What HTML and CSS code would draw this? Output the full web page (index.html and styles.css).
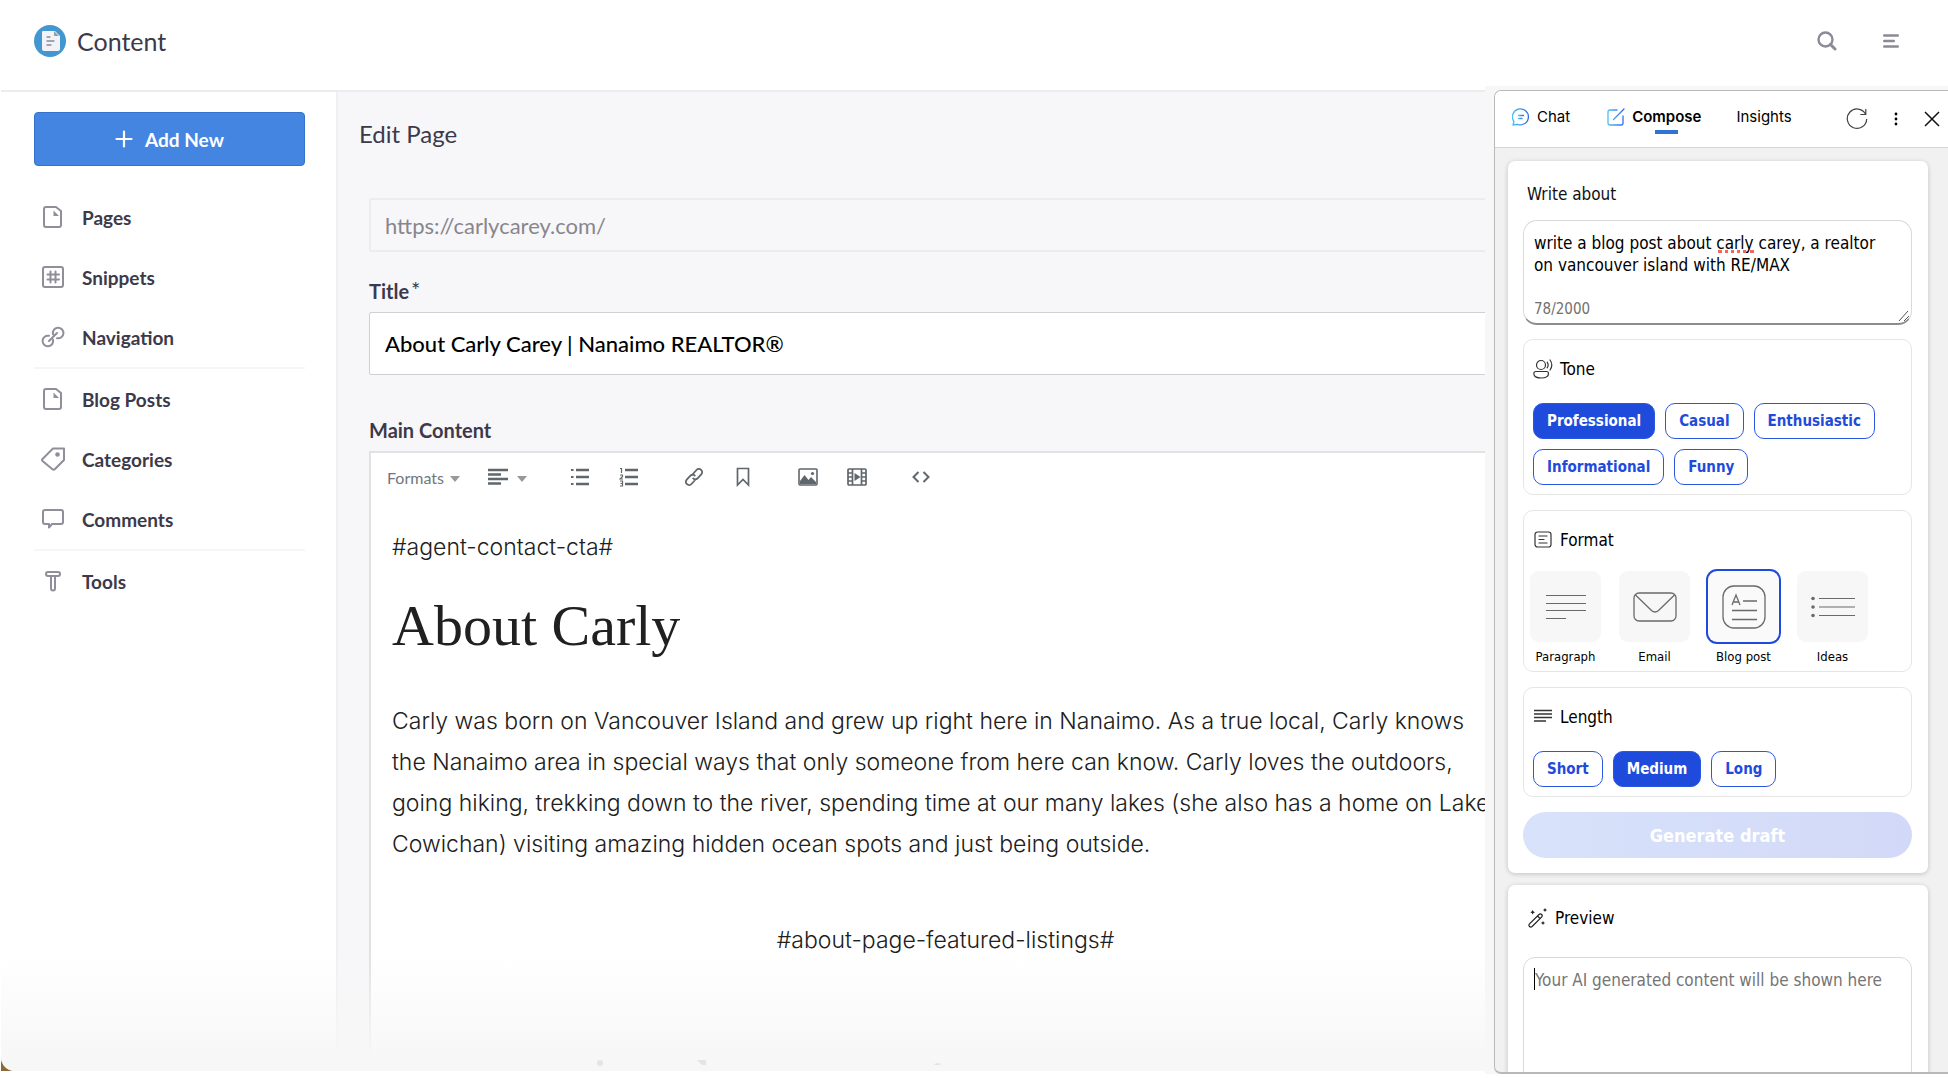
FILE: index.html
```html
<!DOCTYPE html>
<html lang="en">
<head>
<meta charset="utf-8">
<title>Content - Edit Page</title>
<link rel="stylesheet" href="styles.css">
</head>
<body>
<svg class="defs" aria-hidden="true">
  <defs>
    <linearGradient id="sky" x1="0" y1="0" x2="1" y2="0"><stop offset="0" stop-color="#4cc0f5"/><stop offset="1" stop-color="#2f6bea"/></linearGradient>
    <symbol id="i-page" viewBox="0 0 24 24"><path d="M5 2h10l5 4v14a2 2 0 0 1-2 2H5a2 2 0 0 1-2-2V4a2 2 0 0 1 2-2z" fill="none" stroke="currentColor" stroke-width="2" stroke-linejoin="round"/><path d="M12.500 5.500v5.500h5.500z" fill="currentColor"/></symbol>
  </defs>
</svg>
<div class="window">
  <div class="app">
    <header class="topbar">
      <a class="brand" href="#">
        <svg width="32" height="32" viewBox="0 0 32 32"><circle cx="16" cy="16" r="16" fill="#4297d0"/><path d="M9 6h12l5 5v13a2 2 0 0 1-2 2H10a2 2 0 0 1-2-2V7a1 1 0 0 1 1-1z" fill="#f2f3f8"/><path d="M20 6l5 5h-5z" fill="#9a9ea8"/><path d="M13 12h3M13 16h7M13 20h4" stroke="#8b8b95" stroke-width="1.3" stroke-linecap="round"/></svg>
        <span>Content</span>
      </a>
      <div class="topbar-tools">
        <button type="button" aria-label="Search"><svg width="20" height="20" viewBox="0 0 20 20" fill="none" stroke="currentColor"><circle cx="8.500" cy="8.500" r="7" stroke-width="2.400"/><path d="M13.500 13.500l4.500 4.500" stroke-width="3" stroke-linecap="round"/></svg></button>
        <button type="button" aria-label="Menu"><svg width="16" height="14" viewBox="0 0 16 14" fill="none" stroke="currentColor" stroke-width="2.400" stroke-linecap="round"><path d="M1.200 1.500h13.600M1.200 7h9.600M1.200 12.500h13.600"/></svg></button>
      </div>
    </header>
    <div class="body">
      <nav class="sidebar">
        <button type="button" class="add"><svg width="18" height="18" viewBox="0 0 18 18" stroke="#fff" stroke-width="2.200" stroke-linecap="round"><path d="M9 1.500v15M1.500 9h15"/></svg>Add New</button>
        <ul>
          <li><a href="#"><svg width="24" height="24"><use href="#i-page"/></svg>Pages</a></li>
          <li><a href="#"><svg width="24" height="24" viewBox="0 0 24 24" fill="none" stroke="currentColor" stroke-width="2"><rect x="2" y="2" width="20" height="20" rx="2"/><path d="M9.500 6.500v11M14.500 6.500v11M6.500 9.500h11.500M6.500 14.500h11.500" stroke-linecap="round"/></svg>Snippets</a></li>
          <li><a href="#"><svg width="24" height="24" viewBox="0 0 24 24" fill="none" stroke="currentColor" stroke-width="2" stroke-linecap="round"><path d="M12 9.300a5.300 5.300 0 1 1 4 3.900M12 14.700a5.300 5.300 0 1 1-4-3.900M8 16l8-8"/></svg>Navigation</a></li>
        </ul>
        <ul>
          <li><a href="#"><svg width="24" height="24"><use href="#i-page"/></svg>Blog Posts</a></li>
          <li><a href="#"><svg width="24" height="24" viewBox="0 0 24 24" fill="none" stroke="currentColor" stroke-width="2" stroke-linejoin="round"><path d="M12 1.500h11v11.500L14 22a2 2 0 0 1-2.800 0L1.500 14a1.500 1.500 0 0 1 0-2z"/><circle cx="16.500" cy="7.500" r="1.300" fill="currentColor"/></svg>Categories</a></li>
          <li><a href="#"><svg width="24" height="24" viewBox="0 0 24 24" fill="none" stroke="currentColor" stroke-width="2" stroke-linejoin="round"><path d="M4 3h16a2 2 0 0 1 2 2v10a2 2 0 0 1-2 2h-9l-3 3.500v-3.500H4a2 2 0 0 1-2-2V5a2 2 0 0 1 2-2z"/></svg>Comments</a></li>
        </ul>
        <ul>
          <li><a href="#"><svg width="24" height="24" viewBox="0 0 24 24" fill="none" stroke="currentColor" stroke-width="2" stroke-linejoin="round"><rect x="5" y="3" width="14" height="4" rx="2"/><path d="M10 7v12.500a2 2 0 0 0 4 0V7"/></svg>Tools</a></li>
        </ul>
      </nav>
      <main class="main">
        <h1>Edit Page</h1>
        <form class="form">
          <input class="url" type="text" aria-label="Address" value="https://carlycarey.com/" readonly>
          <label for="title">Title<sup>*</sup></label>
          <input class="title" id="title" type="text" value="About Carly Carey | Nanaimo REALTOR®">
          <h2>Main Content</h2>
          <div class="editor">
            <div class="toolbar">
              <button type="button" class="formats">Formats <i class="caret"></i></button>
              <button type="button" class="align" aria-label="Alignment"><svg width="20" height="18" viewBox="0 0 20 18" stroke="currentColor" stroke-width="2.600"><path d="M0 2h20M0 6.500h13M0 11h20M0 15.500h13"/></svg><i class="caret"></i></button>
              <span class="pair">
                <button type="button" aria-label="Bulleted list"><svg width="20" height="20" viewBox="0 0 20 20" stroke="currentColor"><path d="M6 3h13M6 10h13M6 17h13" stroke-width="2.400"/><path d="M1 3h2.500M1 10h2.500M1 17h2.500" stroke-width="2.200"/></svg></button>
                <button type="button" aria-label="Numbered list"><svg width="20" height="20" viewBox="0 0 20 20" fill="none" stroke="currentColor"><path d="M6 3h13M6 10h13M6 17h13" stroke-width="2.400"/><path d="M1 1.500h1.500V6M1 8h2.500v1.500L1 12h3M1 14h2.500v5H1M1.500 16.500h2" stroke-width="1.200"/></svg></button>
              </span>
              <span class="pair">
                <button type="button" aria-label="Link"><svg width="20" height="20" viewBox="0 0 20 20" fill="none" stroke="currentColor" stroke-width="1.800" stroke-linecap="round"><path d="M8 8l4.500-5a3.200 3.200 0 0 1 4.800 4.400l-3.800 4a3 3 0 0 1-4.300 0M12 12l-4.500 5a3.200 3.200 0 0 1-4.800-4.400l3.800-4a3 3 0 0 1 4.300 0"/></svg></button>
                <button type="button" aria-label="Bookmark"><svg width="20" height="20" viewBox="0 0 20 20" fill="none" stroke="currentColor" stroke-width="1.700"><path d="M4.500 1.500h11V18L10 12.500 4.500 18z"/></svg></button>
              </span>
              <span class="pair">
                <button type="button" aria-label="Image"><svg width="20" height="20" viewBox="0 0 20 20" fill="none" stroke="currentColor" stroke-width="1.600"><rect x="1" y="2" width="18" height="16" rx="1"/><path d="M2 17v-3l4.500-6 4 5 2.500-3 5 5v2z" fill="currentColor" stroke="none"/><circle cx="14.500" cy="6.500" r="1.600" fill="currentColor" stroke="none"/></svg></button>
                <button type="button" aria-label="Media"><svg width="20" height="20" viewBox="0 0 20 20" fill="none" stroke="currentColor" stroke-width="1.700"><rect x="1" y="2" width="18" height="16" rx="1"/><path d="M5.500 2v16M14.500 2v16M1 6h4.500M1 10h4.500M1 14h4.500M14.500 6H19M14.500 10H19M14.500 14H19"/><path d="M7.500 6l6 4-6 4z" fill="currentColor" stroke="none"/></svg></button>
              </span>
              <button type="button" class="code" aria-label="Source code"><svg width="18" height="12" viewBox="0 0 18 12" fill="none" stroke="currentColor" stroke-width="2"><path d="M6.500 1L1.500 6l5 5M11.500 1l5 5-5 5"/></svg></button>
            </div>
            <article class="copy">
              <p>#agent-contact-cta#</p>
              <h3>About Carly</h3>
              <p>Carly was born on Vancouver Island and grew up right here in Nanaimo. As a true local, Carly knows<br>the Nanaimo area in special ways that only someone from here can know. Carly loves the outdoors,<br>going hiking, trekking down to the river, spending time at our many lakes (she also has a home on Lake<br>Cowichan) visiting amazing hidden ocean spots and just being outside.</p>
              <p class="centered">#about-page-featured-listings#</p>
            </article>
          </div>
        </form>
      </main>
    </div>
    <div class="fade"><svg width="346" height="6" viewBox="0 0 346 6" fill="#e4e4e4"><circle cx="4" cy="3" r="3"/><path d="M101 0h9v5h-4zM338 5a4 4 0 0 1 7 0z"/></svg></div>
  </div>

  <aside class="panel">
    <div class="tabs">
      <button type="button" class="tab"><svg width="18" height="18" viewBox="0 0 18 18" fill="none" stroke="url(#sky)" stroke-width="1.300" stroke-linecap="round" stroke-linejoin="round"><path d="M1 17l.9-3.500A8 8 0 1 1 5.500 16.300z"/><path d="M6.500 7.500h5M6.500 10.500h3.500"/></svg>Chat</button>
      <button type="button" class="tab active"><svg width="18" height="18" viewBox="0 0 18 18" fill="none" stroke="url(#sky)" stroke-width="1.300" stroke-linecap="round" stroke-linejoin="round"><path d="M10 2H3a2 2 0 0 0-2 2v11a2 2 0 0 0 2 2h11a2 2 0 0 0 2-2V8M6.500 11.500L17 1"/></svg><span>Compose</span></button>
      <button type="button" class="tab">Insights</button>
      <div class="actions">
        <button type="button" aria-label="Refresh"><svg width="22" height="22" viewBox="0 0 22 22" fill="none" stroke="#444" stroke-width="1.200"><path d="M19.500 6A9.700 9.700 0 1 0 20.700 11M19.800 1v5.500h-5.500"/></svg></button>
        <button type="button" aria-label="More"><svg width="4" height="14" viewBox="0 0 4 14"><circle cx="2" cy="2" r="1.400"/><circle cx="2" cy="7" r="1.400"/><circle cx="2" cy="12" r="1.400"/></svg></button>
        <button type="button" aria-label="Close"><svg width="16" height="16" viewBox="0 0 16 16" stroke="#111" stroke-width="1.500"><path d="M1 1l14 14M15 1L1 15"/></svg></button>
      </div>
    </div>
    <div class="panel-body">
      <section class="card">
        <label class="about-label" for="about">Write about</label>
        <div class="prompt">
          <textarea id="about" rows="2" spellcheck="false">write a blog post about carly carey, a realtor
on vancouver island with RE/MAX</textarea>
          <span class="typo"></span>
          <span class="count">78/2000</span>
          <svg class="grip" width="12" height="12" viewBox="0 0 12 12" stroke="#555" stroke-width="1"><path d="M1 11L10 1M6 11l5-5"/></svg>
        </div>
        <section class="group">
          <h4><svg width="20" height="20" viewBox="0 0 20 20" fill="none" stroke="#333" stroke-width="1.200" stroke-linecap="round"><circle cx="8" cy="6" r="4.500"/><path d="M2.500 12.500h11a2 2 0 0 1 2 2c0 3-3 4.500-7.500 4.500S.8 17.500.8 14.500a2 2 0 0 1 1.700-2zM14.200 3.200a5 5 0 0 1 0 5.600M17 1a8.500 8.500 0 0 1 0 10"/></svg>Tone</h4>
          <div class="pills">
            <button type="button" class="pill on" aria-pressed="true">Professional</button>
            <button type="button" class="pill">Casual</button>
            <button type="button" class="pill">Enthusiastic</button>
            <button type="button" class="pill">Informational</button>
            <button type="button" class="pill">Funny</button>
          </div>
        </section>
        <section class="group">
          <h4><svg width="20" height="20" viewBox="0 0 20 20" fill="none" stroke="#333" stroke-width="1.200" stroke-linecap="round"><rect x="2" y="2" width="16" height="15" rx="2.500"/><path d="M6 6h8M6 9.500h5M6 13h8"/></svg>Format</h4>
          <div class="tiles">
            <button type="button" class="tile"><span class="face"><svg width="40" height="40" viewBox="0 0 40 40" fill="none" stroke="currentColor" stroke-width="1.200"><path d="M0 8.500h40M0 16.500h40M0 23.500h40M0 31.500h20"/></svg></span>Paragraph</button>
            <button type="button" class="tile"><span class="face"><svg width="44" height="44" viewBox="0 0 44 44" fill="none" stroke="currentColor" stroke-width="1.300"><rect x="1" y="8" width="42" height="28" rx="5"/><path d="M2.500 10L18.500 25.500q3.500 3 7 0L41.500 10"/></svg></span>Email</button>
            <button type="button" class="tile on" aria-pressed="true"><span class="face"><svg width="44" height="44" viewBox="0 0 44 44" fill="none" stroke="currentColor" stroke-width="1.300"><rect x="1" y="1" width="42" height="42" rx="11"/><path d="M21 16h14M10 25.500h25M10 34.500h25M10 20l4-10 4 10M11.500 17h5"/></svg></span>Blog post</button>
            <button type="button" class="tile"><span class="face"><svg width="44" height="44" viewBox="0 0 44 44" fill="none" stroke="currentColor" stroke-width="1.200"><path d="M8 13.500h36M8 22h36M8 30.500h36"/><g fill="currentColor" stroke="none"><circle cx="2" cy="13.500" r="1.800"/><circle cx="2" cy="22" r="1.800"/><circle cx="2" cy="30.500" r="1.800"/></g></svg></span>Ideas</button>
          </div>
        </section>
        <section class="group">
          <h4><svg width="20" height="20" viewBox="0 0 20 20" stroke="#333" stroke-width="1.300"><path d="M1 3.500h18M1 7h18M1 10.500h18M1 14h12"/></svg>Length</h4>
          <div class="pills">
            <button type="button" class="pill">Short</button>
            <button type="button" class="pill on" aria-pressed="true">Medium</button>
            <button type="button" class="pill">Long</button>
          </div>
        </section>
        <button type="button" class="generate">Generate draft</button>
      </section>
      <section class="card preview">
        <h4><svg width="20" height="20" viewBox="0 0 20 20" fill="none" stroke="#222" stroke-width="1.200"><path d="M1.500 18.500q-1.200-1.200 0-2.600L11 6.500a1.800 1.800 0 0 1 2.600 2.600L4.100 18.500q-1.400 1.200-2.600 0zM9.500 8l2.500 2.500"/><path d="M4.500 2l1 1.500 1.500.7-1.500.7-1 1.500-.7-1.500-1.500-.7 1.500-.7zM17 0l.7 1.300 1.300.7-1.300.7L17 4l-.7-1.300L15 2l1.300-.7zM15 13l.7 1.300 1.300.7-1.300.7L15 17l-.7-1.300L13 15l1.300-.7z" fill="#222" stroke="none"/></svg>Preview</h4>
        <textarea class="result" aria-label="Preview" placeholder="Your AI generated content will be shown here"></textarea>
        <span class="cursor"></span>
      </section>
    </div>
  </aside>
</div>
</body>
</html>
```
FILE: styles.css
```css
* { box-sizing: border-box; }
body { margin: 0; background: #fff; font-family: Lato, "Liberation Sans", sans-serif; color: #3c3a4a; }
button { font: inherit; color: inherit; background: none; border: 0; padding: 0; cursor: pointer; }
svg { display: block; flex: none; }
a { color: inherit; text-decoration: none; }
h1, h2, h3, h4, p, ul { margin: 0; padding: 0; }
.defs { position: absolute; width: 0; height: 0; }

.window { position: relative; height: 100vh; padding: 0 0 7px 1px; overflow: hidden; background: linear-gradient(#fff, #fff) bottom / 100% 7px no-repeat, linear-gradient(90deg, #fff 1px, #8c6a35 1px); }
.app { position: relative; height: 100%; display: flex; flex-direction: column; background: #fff; border-radius: 0 0 0 14px; overflow: hidden; }

.topbar { flex: none; height: 92px; display: flex; justify-content: space-between; align-items: center; padding: 0 49px 8px 33px; border-bottom: 2px solid #ececee; }
.brand { display: flex; align-items: center; gap: 11px; font-size: 25px; }
.topbar-tools { display: flex; align-items: center; gap: 46px; color: #8b8a97; }

.body { flex: 1; min-height: 0; display: flex; }
.sidebar { flex: none; width: 337px; padding: 20px 31px 0 33px; border-right: 2px solid #f0f0f2; }
.add { width: 100%; height: 54px; display: flex; justify-content: center; align-items: center; gap: 12px; border: 1px solid #3572cc; border-radius: 4px; background: #4585e2; color: #fff; font-size: 19px; font-weight: 700; margin-bottom: 21px; }
.sidebar ul { list-style: none; }
.sidebar ul + ul { border-top: 2px solid #f6f6f8; }
.sidebar li a { display: flex; align-items: center; gap: 17px; height: 60px; padding-left: 7px; font-size: 19px; font-weight: 700; }
.sidebar svg { color: #8f8e9a; }
.sidebar .add svg { color: #fff; }

.main { flex: 1; min-width: 0; padding: 27px 463px 0 21px; background: #f7f7fa; overflow: hidden; }
.main h1 { font-size: 24px; line-height: 30px; font-weight: 400; }
.form { margin: 49px -40px 0 10px; display: flex; flex-direction: column; }
.form input { width: 100%; font: inherit; font-size: 22px; padding: 0 15px; border-radius: 2px; outline: 0; }
.form .url { height: 54px; padding: 0 14px; border: 2px solid #ececee; background: #f7f7fa; color: #87868c; }
.form .title { height: 63px; border: 1px solid #cfd0d6; background: #fff; color: #000; font-weight: 500; }
.form label, .form h2 { font-size: 20px; line-height: 28px; font-weight: 700; }
.form label { margin: 25px 0 7px; }
.form sup { font-size: 22px; line-height: 0; vertical-align: 1px; margin-left: 2px; font-weight: 400; }
.form h2 { margin: 41px 0 7px; }

.editor { height: 800px; background: #fff; border: 2px solid #e1e2e4; }
.toolbar { display: flex; align-items: center; height: 48px; padding-left: 16px; color: #5f666c; }
.toolbar button { display: flex; align-items: center; }
.formats { gap: 6px; font-size: 16px; margin-right: 28px; color: #70767c; }
.align { gap: 9px; margin-right: 43px; }
.caret { border: 5px solid transparent; border-top: 6px solid #999; border-bottom: 0; margin-top: 3px; }
.pair { display: flex; gap: 29px; margin-right: 45px; }
.copy { padding: 26px 24px 0 21px; font-family: Inter, "Liberation Sans", sans-serif; font-size: 23px; font-weight: 300; line-height: 41px; color: #202020; white-space: nowrap; }
.copy h3 { font-family: "Liberation Serif", serif; font-size: 58px; line-height: 76px; font-weight: 400; margin: 20px 0 37px; }
.copy .centered { margin: 55px 0 0; text-align: center; }

.fade { position: absolute; inset: auto 0 0 0; height: 116px; padding: 105px 0 0 595px; background: linear-gradient(rgba(247,247,247,0), #f7f7f7 90%); pointer-events: none; }

.panel { position: absolute; top: 90px; right: 0; bottom: 4px; z-index: 1; width: 454px; display: flex; flex-direction: column; overflow: hidden; background: #f1f1f1; border: solid #b9b9b9; border-width: 1px 0 2px 1px; border-radius: 7px 0 0 7px; font-family: "DejaVu Sans Condensed", "Noto Sans", sans-serif; color: #111; }
.window::after { content: ""; position: absolute; top: 86px; right: 0; bottom: 4px; width: 463px; background: #f7f7f7; }
.tabs { flex: none; display: flex; align-items: center; height: 57px; padding: 0 8px 5px 17px; background: #fff; border-bottom: 1px solid #d4d4d4; font-family: Inter, "Liberation Sans", sans-serif; font-size: 15px; color: #000; }
.tab { display: flex; align-items: center; gap: 7px; margin-right: 37px; }
.active { position: relative; font-weight: 600; margin-right: 35px; }
.active::after { content: ""; position: absolute; left: 48px; bottom: -8px; width: 23px; height: 4px; background: #2f74d0; }
.actions { display: flex; align-items: center; gap: 26px; margin-left: auto; padding-top: 5px; }

.panel-body { flex: 1; min-height: 0; padding: 13px 20px 0 13px; overflow: hidden; }
.card { position: relative; padding: 21px 16px 15px 15px; border-radius: 7px; background: #fff; box-shadow: 0 1px 5px rgba(0,0,0,.2); margin-bottom: 12px; }
.about-label { display: block; padding-left: 4px; font-size: 17px; line-height: 24px; margin-bottom: 14px; }
.prompt { position: relative; height: 105px; padding: 11px 10px 0; border: 1px solid #d9d9d9; border-bottom: 2px solid #8c8c8c; border-radius: 14px; margin-bottom: 14px; }
textarea { display: block; width: 100%; border: 0; padding: 0; resize: none; outline: 0; overflow: hidden; background: none; font: inherit; color: #000; }
.prompt textarea { height: 44px; font-size: 17px; line-height: 22px; white-space: pre; }
.count { display: block; margin-top: 22px; font-size: 15px; line-height: 22px; color: #707070; }
.typo { position: absolute; left: 194px; top: 29px; width: 36px; border-bottom: 3px dotted #f4665c; }
.grip { position: absolute; right: 1px; bottom: 1px; }
.group { padding: 14px 6px 9px 9px; border: 1px solid #e6e6e6; border-radius: 10px; margin-bottom: 15px; }
.panel h4 { display: flex; align-items: center; gap: 7px; font-size: 17px; line-height: 30px; font-weight: 400; color: #000; }
.pills { display: flex; flex-wrap: wrap; gap: 10px; margin-top: 19px; }
.pill { height: 36px; padding: 0 13px; border: 1px solid #2b57e0; border-radius: 10px; color: #1f4bdc; font-size: 15px; font-weight: 700; }
.pill.on { background: #1f4bdc; color: #fff; }
.tiles { display: flex; gap: 18px; margin: 16px 0 -5px -3px; }
.tile { width: 71px; display: flex; flex-direction: column; align-items: center; gap: 5px; font-size: 13px; line-height: 20px; white-space: nowrap; color: #000; }
.face { width: 71px; height: 71px; display: flex; justify-content: center; align-items: center; border-radius: 9px; background: #f7f7f7; color: #6a6a6a; }
.tile.on .face { box-shadow: 0 0 0 2px #1f4bdc; background: #fafafa; }
.generate { width: 100%; height: 46px; border-radius: 23px; background: linear-gradient(90deg, #d8e2fa, #d2d9f8); color: #fff; font-size: 18px; font-weight: 700; }
.preview { padding-top: 18px; }
.preview h4 { padding-left: 5px; margin-bottom: 24px; }
.result { height: 200px; padding: 11px; border: 1px solid #d9d9d9; border-radius: 12px; font-size: 17px; line-height: 22px; white-space: nowrap; }
.result::placeholder { color: #757575; opacity: 1; }
.cursor { position: absolute; left: 26px; top: 83px; width: 1px; height: 22px; background: #000; }
```
